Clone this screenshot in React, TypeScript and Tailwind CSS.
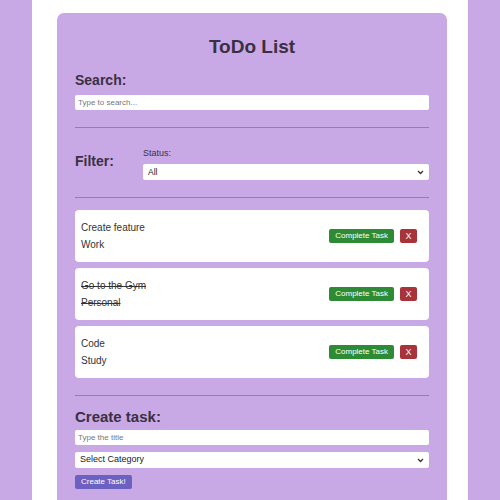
import React from 'react';

interface Task {
  title: string;
  category: string;
  done: boolean;
}

const tasks: Task[] = [
  { title: 'Create feature', category: 'Work', done: false },
  { title: 'Go to the Gym', category: 'Personal', done: true },
  { title: 'Code', category: 'Study', done: false },
];

function Divider() {
  return <hr className="border-0 border-t-[1.5px] border-[#9b7aad] my-0" />;
}

function Chevron() {
  return (
    <svg width="7" height="5" viewBox="0 0 7 5">
      <path d="M1 1 L3.5 3.5 L6 1" stroke="#333" strokeWidth="1.3" fill="none" />
    </svg>
  );
}

export default function App() {
  return (
    <div
      className="h-[500px] overflow-hidden bg-[#c8a8e5] flex justify-center text-[#3b3042]"
      style={{ fontFamily: '"Liberation Sans", Arial, sans-serif' }}
    >
      <div className="w-[436px] bg-white pt-[13px] pl-[25px]">
        <div className="w-[390px] bg-[#c8a8e5] rounded-[7px] px-[18px] pt-[22px] pb-6">
          <h1 className="text-center text-[19px] font-bold leading-6 mb-[11px]">ToDo List</h1>

          {/* Search */}
          <h2 className="text-[14px] font-bold leading-5 mb-[5px]">Search:</h2>
          <input
            className="block w-full h-[15px] bg-white rounded-[2px] px-[3px] text-[8px] placeholder:text-[#777] outline-none"
            placeholder="Type to search..."
          />
          <div className="mt-[17px]">
            <Divider />
          </div>

          {/* Filter */}
          <div className="flex items-start pt-[19px] pb-[17px]">
            <h2 className="w-[68px] text-[14px] font-bold leading-5 mt-[4px]">Filter:</h2>
            <div className="flex-1">
              <div className="text-[9px] leading-3 mb-[5px]">Status:</div>
              <div className="h-[16px] bg-white rounded-[2px] flex items-center justify-between px-[5px] text-[8.5px] text-[#222]">
                <span>All</span>
                <Chevron />
              </div>
            </div>
          </div>
          <Divider />

          {/* Tasks */}
          <div className="flex flex-col gap-[6px] mt-[12px]">
            {tasks.map((t, i) => (
              <div
                key={i}
                className="h-[52px] bg-white rounded-[4px] flex items-center justify-between pl-[6px] pr-[12px]"
              >
                <div className={`text-[10px] leading-[17px] text-[#333] ${t.done ? 'line-through' : ''}`}>
                  <div>{t.title}</div>
                  <div>{t.category}</div>
                </div>
                <div className="flex items-center gap-[6px]">
                  <button className="h-[14px] px-[6px] bg-[#2e8b35] text-white text-[8px] rounded-[2px] leading-[14px]">
                    Complete Task
                  </button>
                  <button className="h-[14px] w-[17px] bg-[#a8333a] text-white text-[9px] rounded-[2px] leading-[14px]">
                    X
                  </button>
                </div>
              </div>
            ))}
          </div>

          <div className="mt-[17px]">
            <Divider />
          </div>

          {/* Create */}
          <h2 className="text-[15px] font-bold leading-5 mt-[11px] mb-[3px]">Create task:</h2>
          <input
            className="block w-full h-[15px] bg-white rounded-[2px] px-[3px] text-[8px] placeholder:text-[#777] outline-none"
            placeholder="Type the title"
          />
          <div className="mt-[7px] h-[16px] bg-white rounded-[2px] flex items-center justify-between px-[5px] text-[9px] text-[#222]">
            <span>Select Category</span>
            <Chevron />
          </div>
          <button className="block mt-[7px] h-[14px] px-[6px] bg-[#6c60c0] text-white text-[8px] rounded-[2px] leading-[14px]">
            Create Task!
          </button>
        </div>
      </div>
    </div>
  );
}
